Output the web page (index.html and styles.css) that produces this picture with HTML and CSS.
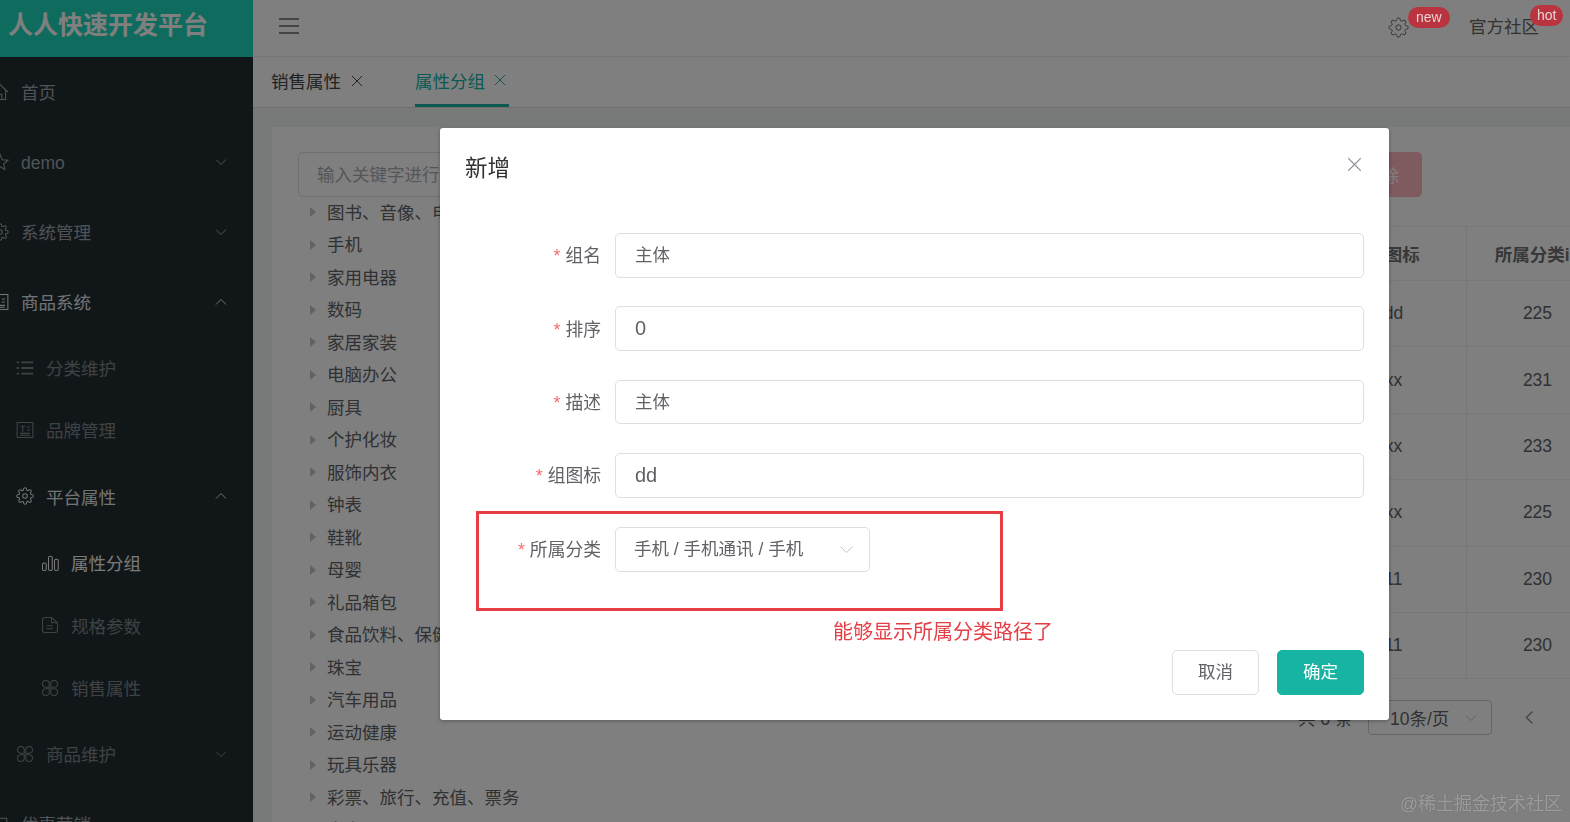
FILE: index.html
```html
<!DOCTYPE html>
<html lang="en">

<head>
    <meta charset="UTF-8">
    <meta name="viewport" content="width=device-width, initial-scale=1.0">
    <title>人人快速开发平台</title>
    <link rel="stylesheet" href="styles.css">
</head>

<body>
    <svg class="sprites" width="0" height="0">
        <symbol id="i-gear" viewBox="0 0 24 24">
            <path d="M19.4 15a1.65 1.65 0 0 0 .33 1.82l.06.06a2 2 0 0 1 0 2.83 2 2 0 0 1-2.83 0l-.06-.06a1.65 1.65 0 0 0-1.82-.33 1.65 1.65 0 0 0-1 1.51V21a2 2 0 0 1-2 2 2 2 0 0 1-2-2v-.09A1.65 1.65 0 0 0 9 19.4a1.65 1.65 0 0 0-1.82.33l-.06.06a2 2 0 0 1-2.83 0 2 2 0 0 1 0-2.83l.06-.06a1.65 1.65 0 0 0 .33-1.82 1.65 1.65 0 0 0-1.51-1H3a2 2 0 0 1-2-2 2 2 0 0 1 2-2h.09A1.65 1.65 0 0 0 4.6 9a1.65 1.65 0 0 0-.33-1.82l-.06-.06a2 2 0 0 1 0-2.83 2 2 0 0 1 2.83 0l.06.06a1.65 1.65 0 0 0 1.82.33H9a1.65 1.65 0 0 0 1-1.51V3a2 2 0 0 1 2-2 2 2 0 0 1 2 2v.09a1.65 1.65 0 0 0 1 1.51 1.65 1.65 0 0 0 1.82-.33l.06-.06a2 2 0 0 1 2.83 0 2 2 0 0 1 0 2.83l-.06.06a1.65 1.65 0 0 0-.33 1.82V9a1.65 1.65 0 0 0 1.51 1H21a2 2 0 0 1 2 2 2 2 0 0 1-2 2h-.09a1.65 1.65 0 0 0-1.51 1z"/>
            <circle cx="12" cy="12" r="3"/>
        </symbol>
        <symbol id="i-grid" viewBox="0 0 24 24">
            <path d="M11 11H6a4.500 4.500 0 1 1 5-5zM13 11h5a4.500 4.500 0 1 0-5-5zM11 13H6a4.500 4.500 0 1 0 5 5zM13 13h5a4.500 4.500 0 1 1-5 5z"/>
        </symbol>
        <symbol id="i-news" viewBox="0 0 24 24">
            <rect x="1.500" y="2" width="21" height="20"/>
            <path d="M6 7h6M9 7v8M14.500 8h4M14.500 12h4M5.500 16.500h13M5.500 19h13"/>
        </symbol>
        <symbol id="i-down" viewBox="0 0 24 24">
            <path d="M2 7l10 10L22 7"/>
        </symbol>
        <symbol id="i-close" viewBox="0 0 24 24">
            <path d="M2 2l20 20M22 2L2 22"/>
        </symbol>
    </svg>

    <div class="app">
        <aside class="sidebar">
            <div class="brand">人人快速开发平台</div>
            <nav class="menu">
                <div class="menu-row top">
                    <svg class="icon" viewBox="0 0 24 24"><path d="M1.500 12L12 2l10.500 10M4.500 10v12h15V10M9.500 22v-7h5v7"/></svg>
                    <span class="menu-text">首页</span>
                </div>
                <div class="menu-row top">
                    <svg class="icon" viewBox="0 0 24 24"><path d="M12 2l3 7 7.500.7-5.700 5 1.700 7.300-6.500-3.900L5.500 22l1.700-7.300-5.700-5L9 9z"/></svg>
                    <span class="menu-text latin">demo</span>
                    <svg class="chevron"><use href="#i-down"/></svg>
                </div>
                <div class="menu-row top">
                    <svg class="icon"><use href="#i-gear"/></svg>
                    <span class="menu-text">系统管理</span>
                    <svg class="chevron"><use href="#i-down"/></svg>
                </div>
                <div class="menu-row top open">
                    <svg class="icon"><use href="#i-news"/></svg>
                    <span class="menu-text">商品系统</span>
                    <svg class="chevron flip"><use href="#i-down"/></svg>
                </div>
                <div class="menu-row sub dim">
                    <svg class="icon" viewBox="0 0 24 24"><path class="thick" d="M7 4.500h16M7 12h16M7 19.500h16M1 4.500h3M1 12h3M1 19.500h3"/></svg>
                    <span class="menu-text">分类维护</span>
                </div>
                <div class="menu-row sub dim">
                    <svg class="icon"><use href="#i-news"/></svg>
                    <span class="menu-text">品牌管理</span>
                </div>
                <div class="menu-row sub tall open">
                    <svg class="icon"><use href="#i-gear"/></svg>
                    <span class="menu-text">平台属性</span>
                    <svg class="chevron flip"><use href="#i-down"/></svg>
                </div>
                <div class="menu-row leaf active">
                    <svg class="icon" viewBox="0 0 24 24"><rect x="2" y="12" width="5" height="10" rx="2"/><rect x="10" y="3" width="5" height="19" rx="2"/><rect x="18" y="7" width="5" height="15" rx="2"/></svg>
                    <span class="menu-text">属性分组</span>
                </div>
                <div class="menu-row leaf dim">
                    <svg class="icon" viewBox="0 0 24 24"><path d="M14 2H5a3 3 0 0 0-3 3v14a3 3 0 0 0 3 3h14a3 3 0 0 0 3-3V9zM14 2v7h8M7 13h9M7 17h9"/></svg>
                    <span class="menu-text">规格参数</span>
                </div>
                <div class="menu-row leaf dim">
                    <svg class="icon"><use href="#i-grid"/></svg>
                    <span class="menu-text">销售属性</span>
                </div>
                <div class="menu-row sub tall dim">
                    <svg class="icon"><use href="#i-grid"/></svg>
                    <span class="menu-text">商品维护</span>
                    <svg class="chevron"><use href="#i-down"/></svg>
                </div>
                <div class="menu-row top">
                    <svg class="icon" viewBox="0 0 24 24"><path d="M3 3h18v18H3z"/></svg>
                    <span class="menu-text">优惠营销</span>
                    <svg class="chevron"><use href="#i-down"/></svg>
                </div>
            </nav>
        </aside>

        <main class="main">
            <header class="topbar">
                <svg class="hamburger" viewBox="0 0 20 16"><path d="M0 1h20M0 8h20M0 15h20"/></svg>
                <div class="topbar-right">
                    <div class="top-item gear-item">
                        <svg class="top-gear"><use href="#i-gear"/></svg>
                        <span class="badge badge-new">new</span>
                    </div>
                    <div class="top-item community">
                        官方社区
                        <span class="badge badge-hot">hot</span>
                    </div>
                </div>
            </header>

            <div class="tabs">
                <div class="tab">销售属性<svg class="tab-close"><use href="#i-close"/></svg></div>
                <div class="tab active">属性分组<svg class="tab-close"><use href="#i-close"/></svg></div>
            </div>

            <section class="content">
                <div class="card">
                    <div class="tree-col">
                        <div class="search">输入关键字进行过滤</div>
                        <ul class="tree">
                            <li>图书、音像、电子书刊</li>
                            <li>手机</li>
                            <li>家用电器</li>
                            <li>数码</li>
                            <li>家居家装</li>
                            <li>电脑办公</li>
                            <li>厨具</li>
                            <li>个护化妆</li>
                            <li>服饰内衣</li>
                            <li>钟表</li>
                            <li>鞋靴</li>
                            <li>母婴</li>
                            <li>礼品箱包</li>
                            <li>食品饮料、保健食品</li>
                            <li>珠宝</li>
                            <li>汽车用品</li>
                            <li>运动健康</li>
                            <li>玩具乐器</li>
                            <li>彩票、旅行、充值、票务</li>
                            <li>房产</li>
                        </ul>
                    </div>
                    <div class="table-col">
                        <div class="toolbar"><button class="btn-danger">批量删除</button></div>
                        <div class="table">
                            <div class="table-row head"><span></span><span>组图标</span><span>所属分类id</span></div>
                            <div class="table-row"><span></span><span>dd</span><span>225</span></div>
                            <div class="table-row"><span></span><span>xx</span><span>231</span></div>
                            <div class="table-row"><span></span><span>xx</span><span>233</span></div>
                            <div class="table-row"><span></span><span>xx</span><span>225</span></div>
                            <div class="table-row"><span></span><span>11</span><span>230</span></div>
                            <div class="table-row"><span></span><span>11</span><span>230</span></div>
                        </div>
                        <div class="pager">
                            <span class="pager-total">共 6 条</span>
                            <div class="pager-size">10条/页<svg class="chevron"><use href="#i-down"/></svg></div>
                            <svg class="pager-prev" viewBox="0 0 12 20"><path d="M10 2L2 10l8 8"/></svg>
                        </div>
                    </div>
                </div>
            </section>
        </main>
    </div>

    <div class="mask">
        <div class="dialog">
            <div class="dialog-head">
                <span class="dialog-title">新增</span>
                <svg class="dialog-close"><use href="#i-close"/></svg>
            </div>
            <div class="form">
                <div class="form-row">
                    <label class="form-label">组名</label>
                    <div class="input">主体</div>
                </div>
                <div class="form-row">
                    <label class="form-label">排序</label>
                    <div class="input value-latin">0</div>
                </div>
                <div class="form-row">
                    <label class="form-label">描述</label>
                    <div class="input">主体</div>
                </div>
                <div class="form-row">
                    <label class="form-label">组图标</label>
                    <div class="input value-latin">dd</div>
                </div>
                <div class="form-row">
                    <label class="form-label">所属分类</label>
                    <div class="input cascader">手机 / 手机通讯 / 手机<svg class="chevron"><use href="#i-down"/></svg></div>
                </div>
            </div>
            <div class="dialog-foot">
                <button class="btn">取消</button>
                <button class="btn primary">确定</button>
            </div>
            <div class="mark-box"></div>
            <div class="mark-text">能够显示所属分类路径了</div>
        </div>
    </div>

    <div class="watermark">@稀土掘金技术社区</div>
</body>

</html>
```

FILE: styles.css
```css
* {
    box-sizing: border-box;
}

html,
body {
    margin: 0;
    padding: 0;
    height: 100%;
    overflow: hidden;
}

body {
    font-family: "Liberation Sans", "Noto Sans CJK SC", sans-serif;
    font-size: 17.5px;
    color: #606266;
    background-color: #fff;
}

svg {
    fill: none;
    stroke: currentColor;
    stroke-width: 1.4;
}

.sprites {
    position: absolute;
}

.app {
    display: flex;
    height: 822px;
    overflow: hidden;
}

/* sidebar */
.sidebar {
    flex: 0 0 253px;
    background-color: #222e33;
    overflow: hidden;
}

.brand {
    height: 57px;
    padding-left: 8px;
    font-size: 25px;
    font-weight: 700;
    line-height: 51px;
    color: #fff;
    background-color: #1fd6ba;
}

.menu-row {
    display: flex;
    align-items: center;
    height: 70px;
    padding-right: 26px;
    color: #a0a6ab;
}

.menu-row.top {
    margin-left: -9px;
}

.menu-row.sub {
    height: 62px;
    padding-left: 16px;
}

.menu-row.sub.tall {
    height: 70.500px;
}

.menu-row.leaf {
    height: 62.500px;
    padding-left: 41px;
}

.menu-row.dim {
    color: #7e8489;
}

.menu-row.open {
    color: #e4e6e8;
}

.menu-row.active {
    color: #f2f4f5;
}

.icon {
    flex: 0 0 18px;
    width: 18px;
    height: 18px;
    margin-right: 12px;
}

.icon .thick {
    stroke-width: 2.600;
}

.menu-text {
    flex: 1;
    padding-bottom: 2px;
}

.menu-text.latin {
    padding: 2px 0 0;
}

.menu-row.leaf .menu-text,
.menu-row.sub.open .menu-text {
    padding-bottom: 0;
}

.chevron {
    flex: 0 0 12px;
    width: 12px;
    height: 12px;
    stroke-width: 2;
}

.chevron.flip {
    transform: rotate(180deg);
}

/* top area */
.main {
    flex: 1;
    min-width: 0;
    display: flex;
    flex-direction: column;
}

.topbar {
    display: flex;
    align-items: center;
    justify-content: space-between;
    flex: 0 0 57px;
    padding: 0 31px 0 26px;
    border-bottom: 1px solid #f0f0f0;
}

.hamburger {
    width: 20px;
    height: 16px;
    margin-bottom: 4px;
    stroke-width: 1.300;
    color: #666;
}

.topbar-right {
    display: flex;
    align-items: center;
    gap: 60px;
    padding-bottom: 2px;
}

.top-item {
    position: relative;
    color: #666;
    font-size: 17.5px;
}

.top-item.community {
    padding-bottom: 4px;
}

.top-gear {
    display: block;
    width: 21px;
    height: 21px;
    stroke-width: 1.100;
}

/* badges sit above the dialog mask, so they keep their colour */
.badge {
    position: absolute;
    z-index: 10;
    height: 21px;
    padding: 0 7px;
    font-size: 14px;
    line-height: 20px;
    color: #e4d4d4;
    background-color: #b9343f;
    border-radius: 11px;
    white-space: nowrap;
}

.badge-new {
    top: -10px;
    left: 20px;
    padding: 0 8px;
}

.badge-hot {
    top: -8px;
    left: 61px;
}

.tabs {
    display: flex;
    flex: 0 0 51px;
    padding-left: 18px;
    gap: 52px;
    border-bottom: 1px solid #ddd;
    box-shadow: 0 1px 3px rgba(0, 0, 0, .08);
}

.tab {
    display: flex;
    align-items: center;
    height: 50px;
    padding-bottom: 3px;
    color: #444;
}

.tab.active {
    width: 94px;
    padding-bottom: 1px;
    color: #17b3a3;
    border-bottom: 3px solid #17b3a3;
}

.tab-close {
    width: 12px;
    height: 12px;
    margin-left: 10px;
    stroke-width: 2;
}

.tab.active .tab-close {
    margin-left: 9px;
}

/* page content below the tabs */
.content {
    flex: 1;
    padding: 19px 0 0 19px;
    background-color: #f1f4f5;
    overflow: hidden;
}

.card {
    display: flex;
    width: 1341px;
    height: 760px;
    padding: 25px 6px 0 26px;
    background-color: #fff;
}

.tree-col {
    flex: 1;
}

.search {
    width: 300px;
    height: 45px;
    padding-left: 18px;
    line-height: 44px;
    color: #a9adb3;
    border: 1px solid #dcdfe6;
    border-radius: 5px;
}

.tree {
    list-style: none;
    margin: -2px 0 0;
    padding: 0;
}

.tree li {
    display: flex;
    align-items: center;
    height: 32.500px;
    padding-left: 29px;
    position: relative;
}

.tree li::before {
    content: "";
    position: absolute;
    left: 12px;
    top: 12px;
    border-style: solid;
    border-width: 5px 0 5px 6px;
    border-color: transparent transparent transparent #c0c4cc;
}

.table-col {
    flex: 0 0 400px;
}

.toolbar {
    height: 74px;
    display: flex;
    justify-content: flex-start;
}

.btn-danger {
    width: 122px;
    height: 45px;
    margin-left: 94px;
    padding: 0 0 0 6px;
    font: inherit;
    color: #fff;
    background-color: #ffb4bc;
    border: 0;
    border-radius: 5px;
}

.table {
    margin-left: -89px;
    border-top: 1px solid #ebeef5;
}

.table-row {
    display: grid;
    grid-template-columns: 200px 150px 140px;
    height: 66.400px;
    border-bottom: 1px solid #ebeef5;
}

.table-row.head {
    height: 54px;
    font-weight: 700;
    color: #707070;
}

.table-row span {
    display: flex;
    align-items: center;
    justify-content: center;
    border-right: 1px solid #ebeef5;
    white-space: nowrap;
}

.table-row span:nth-child(2) {
    padding-left: 4px;
}

.table-row span:nth-child(3) {
    padding-left: 2px;
}

.pager {
    display: flex;
    align-items: center;
    margin: 21px 0 0 92px;
}

.pager-total {
    width: 70px;
}

.pager-size {
    display: flex;
    align-items: center;
    justify-content: space-between;
    width: 124px;
    height: 35px;
    padding: 0 14px 0 21px;
    border: 1px solid #c9ccd2;
    border-radius: 4px;
}

.pager-size .chevron {
    color: #c0c4cc;
}

.pager-prev {
    width: 9px;
    height: 15px;
    margin-left: 33px;
    stroke-width: 2;
    color: #909399;
}

/* dialog over everything */
.mask {
    position: fixed;
    top: 0;
    right: 0;
    bottom: 0;
    left: 0;
    padding: 128px 0 0 440px;
    background-color: rgba(0, 0, 0, .5);
}

.dialog {
    position: relative;
    width: 949px;
    height: 592px;
    padding: 0 25px;
    background-color: #fff;
    border-radius: 3px;
    box-shadow: 0 1px 4px rgba(0, 0, 0, .3);
}

.dialog-head {
    display: flex;
    align-items: center;
    justify-content: space-between;
    height: 105px;
    padding: 0 2px 30px 0;
}

.dialog-title {
    font-size: 22.500px;
    color: #303133;
}

.dialog-close {
    width: 15px;
    height: 15px;
    margin-bottom: 2px;
    color: #909399;
    stroke-width: 1.800;
}

.form-row {
    display: flex;
    align-items: center;
    margin-bottom: 28.900px;
}

.form-label {
    flex: 0 0 136px;
    margin-right: 14px;
    padding-bottom: 2px;
    font-size: 17.800px;
    text-align: right;
}

.form-label::before {
    content: "*";
    margin-right: 5px;
    color: #f56c6c;
}

.input {
    flex: 1;
    height: 44.500px;
    padding-left: 19px;
    line-height: 42px;
    border: 1px solid #dcdfe6;
    border-radius: 5px;
}

.input.value-latin {
    font-size: 20px;
}

.cascader {
    flex: 0 0 255px;
    height: 45px;
    display: flex;
    align-items: center;
    justify-content: space-between;
    padding: 0 15px 0 18px;
}

.cascader .chevron {
    flex-basis: 15px;
    color: #c0c4cc;
    width: 15px;
    height: 15px;
    stroke-width: 1.600;
}

.dialog-foot {
    display: flex;
    justify-content: flex-end;
    gap: 18px;
    margin-top: 78px;
}

.btn {
    width: 87px;
    height: 45px;
    padding: 0 0 3px;
    font: inherit;
    color: #606266;
    background-color: #fff;
    border: 1px solid #dcdfe6;
    border-radius: 5px;
}

.btn.primary {
    color: #fff;
    background-color: #17b3a3;
    border-color: #17b3a3;
}

/* hand-drawn note on the screenshot */
.mark-box {
    position: absolute;
    top: 383px;
    left: 36px;
    width: 527px;
    height: 100px;
    border: 3px solid #e63e45;
}

.mark-text {
    position: absolute;
    top: 488px;
    left: 393px;
    font-size: 20px;
    color: #e63e45;
    white-space: nowrap;
}

.watermark {
    position: fixed;
    right: 8px;
    bottom: 7px;
    font-size: 18px;
    color: rgba(255, 255, 255, .42);
    text-shadow: 0 0 1px rgba(0, 0, 0, .4);
}
```
